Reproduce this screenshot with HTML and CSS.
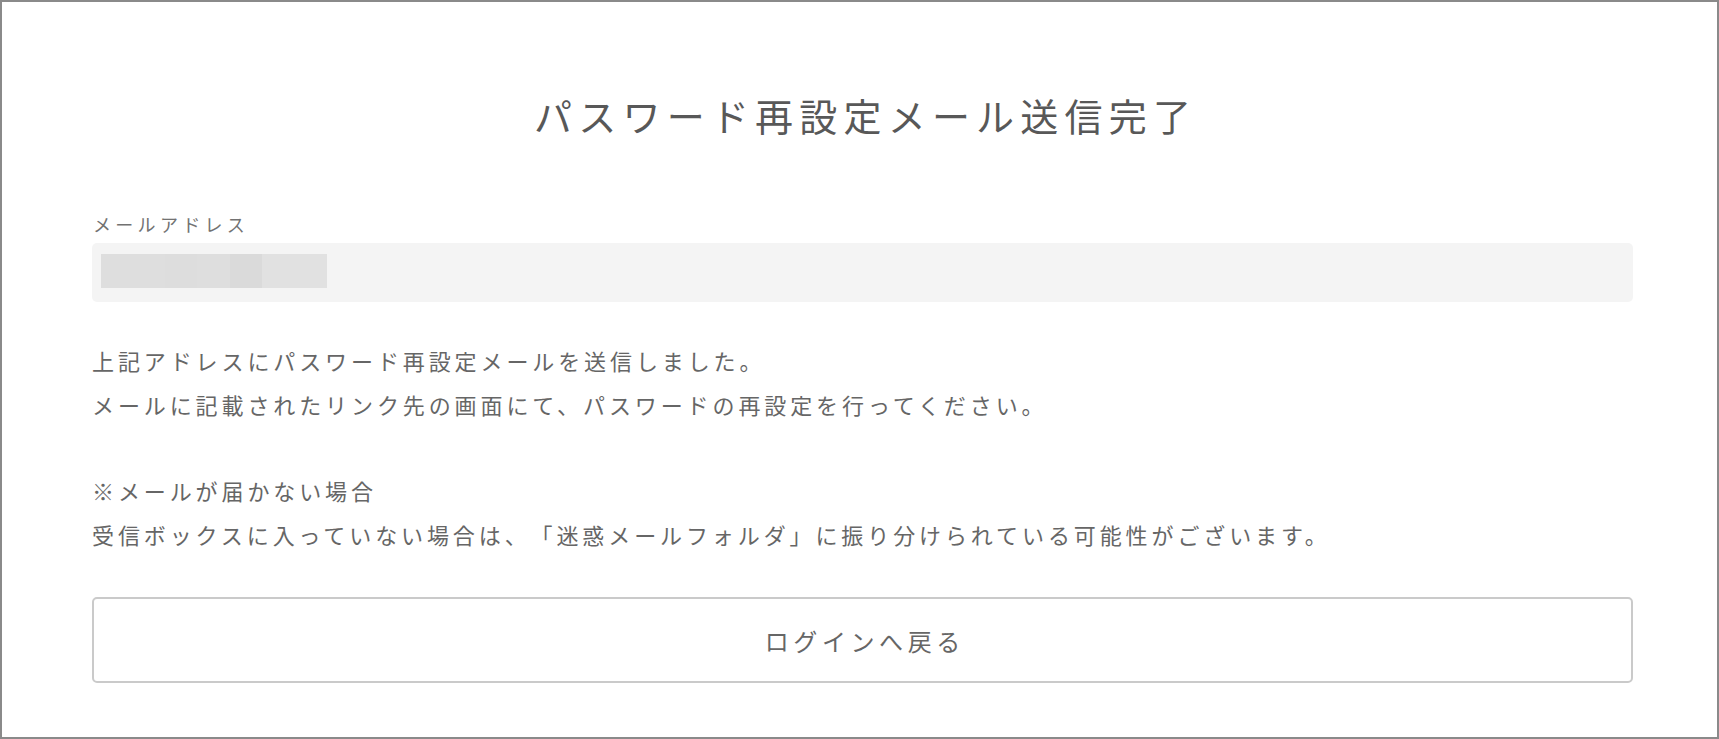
FILE: index.html
```html
<!DOCTYPE html>
<html lang="ja">
<head>
<meta charset="utf-8">
<title>パスワード再設定メール送信完了</title>
<link rel="stylesheet" href="styles.css">
</head>
<body>
<div class="frame">
  <main class="content">
    <h1 class="title">パスワード再設定メール送信完了</h1>
    <div class="field">
      <div class="field-label">メールアドレス</div>
      <div class="field-box">
        <div class="mosaic">
          <span class="m m1"></span><span class="m m2"></span><span class="m m3"></span><span class="m m4"></span><span class="m m5"></span>
        </div>
      </div>
    </div>
    <p class="msg">上記アドレスにパスワード再設定メールを送信しました。<br>メールに記載されたリンク先の画面にて、パスワードの再設定を行ってください。</p>
    <p class="msg msg-note">※メールが届かない場合<br>受信ボックスに入っていない場合は、「迷惑メールフォルダ」に振り分けられている可能性がございます。</p>
    <button class="back-btn" type="button">ログインへ戻る</button>
  </main>
</div>
</body>
</html>
```

FILE: styles.css
```css
* { box-sizing: border-box; }
html, body { margin: 0; padding: 0; background: #fff; }
body {
  font-family: "Noto Sans CJK JP", "Noto Sans", sans-serif;
  color: #666;
  text-spacing-trim: space-all;
}
.frame {
  width: 1719px;
  height: 739px;
  border: 2px solid #8a8a8a;
  background: #fff;
  padding: 0 84px 0 90px;
}
.content {
  display: flex;
  flex-direction: column;
}
.title {
  margin: 84px 0 0;
  font-size: 38px;
  font-weight: 400;
  line-height: 57px;
  letter-spacing: 6.2px;
  text-indent: 6.2px;
  text-align: center;
  color: #585858;
}
.field {
  margin-top: 68px;
  display: flex;
  flex-direction: column;
  gap: 5px;
}
.field-label {
  font-size: 18px;
  line-height: 27px;
  letter-spacing: 4.3px;
  color: #727272;
  padding-left: 1px;
}
.field-box {
  height: 59px;
  background: #f4f4f4;
  border-radius: 5px;
  padding: 11px 9px;
}
.mosaic {
  display: flex;
  height: 34px;
  width: 226px;
}
.m { display: block; height: 100%; }
.m1 { width: 64px; background: #dedede; }
.m2 { width: 32px; background: #dddddd; }
.m3 { width: 33px; background: #dedede; }
.m4 { width: 32px; background: #dadada; }
.m5 { width: 65px; background: #e1e1e1; }
.msg {
  margin: 36px 0 0;
  font-size: 22px;
  line-height: 44px;
  letter-spacing: 3.9px;
  color: #666;
}
.msg-note { margin-top: 42px; }
.back-btn {
  margin-top: 41px;
  height: 86px;
  width: 100%;
  background: #fff;
  border: 2px solid #cacaca;
  border-radius: 5px;
  font-family: "Noto Sans CJK JP", "Noto Sans", sans-serif;
  font-size: 24px;
  letter-spacing: 4.6px;
  text-indent: 4.6px;
  color: #666;
  padding: 0;
  cursor: pointer;
}
```
